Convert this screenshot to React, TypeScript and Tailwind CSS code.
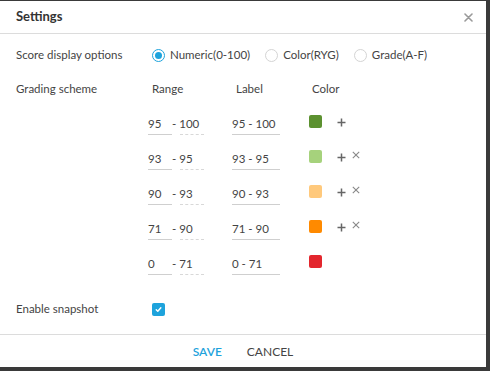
import React from "react";

const rows = [
  { from: "95", to: "100", label: "95 - 100", color: "#5c9130", plus: true, x: false },
  { from: "93", to: "95", label: "93 - 95", color: "#a6d27c", plus: true, x: true },
  { from: "90", to: "93", label: "90 - 93", color: "#ffc97c", plus: true, x: true },
  { from: "71", to: "90", label: "71 - 90", color: "#ff8a00", plus: true, x: true },
  { from: "0", to: "71", label: "0 - 71", color: "#e3262d", plus: false, x: false },
];

function Radio({ checked, label }: { checked?: boolean; label: string }) {
  return (
    <div className="flex items-center gap-[5px]">
      <div
        className={
          "w-[13px] h-[13px] rounded-full border flex items-center justify-center " +
          (checked ? "border-[#1ea3dc]" : "border-[#d4d4d4]")
        }
      >
        {checked && <div className="w-[7px] h-[7px] rounded-full bg-[#1ea3dc]" />}
      </div>
      <span>{label}</span>
    </div>
  );
}

export default function App() {
  return (
    <div
      className="w-[490px] h-[371px] bg-[#3a3a3a] pt-[1px] pr-[4px] pb-[4px] text-[#444] text-[11.5px]"
      style={{ fontFamily: "Lato, 'Open Sans', sans-serif" }}
    >
      <div className="bg-white w-full h-full flex flex-col">
        <div className="h-[33px] flex items-center justify-between px-[16px] border-b border-[#dcdcdc]">
          <span className="text-[13px] font-bold text-[#333]">Settings</span>
          <svg width="9" height="9" viewBox="0 0 9 9" className="mr-[-3px]">
            <path d="M1 1 L8 8 M8 1 L1 8" stroke="#9a9a9a" strokeWidth="1.6" strokeLinecap="round" />
          </svg>
        </div>
        <div className="flex-1 px-[16px] pt-[13px]">
          <div className="flex items-center h-[16px]">
            <div className="w-[136px]">Score display options</div>
            <div className="flex items-center gap-[15px]">
              <Radio checked label="Numeric(0-100)" />
              <Radio label="Color(RYG)" />
              <Radio label="Grade(A-F)" />
            </div>
          </div>
          <div className="flex items-center h-[16px] mt-[18px]">
            <div className="w-[136px]">Grading scheme</div>
            <div className="w-[84px]">Range</div>
            <div className="w-[76px]">Label</div>
            <div>Color</div>
          </div>
          <div className="flex flex-col gap-[14px] mt-[17px] ml-[132px]">
            {rows.map((r) => (
              <div key={r.label} className="flex items-start h-[21px]">
                <div className="w-[24px] h-[21px] border-b border-[#cfcfcf] pt-[1px]">{r.from}</div>
                <div className="w-[32px] h-[21px] pt-[1px] relative">
                  <span>- {r.to}</span>
                  <div className="absolute left-[8px] right-0 bottom-0 border-b border-dashed border-[#d8d8d8]" />
                </div>
                <div className="w-[48px] h-[21px] border-b border-[#cfcfcf] ml-[28px] pt-[1px]">{r.label}</div>
                <div
                  className="w-[13px] h-[13px] rounded-[2px] ml-[29px] mt-[1px]"
                  style={{ backgroundColor: r.color }}
                />
                {r.plus && (
                  <svg width="9" height="9" viewBox="0 0 9 9" className="ml-[15px] mt-[4px]">
                    <path d="M4.5 0.5 V8.5 M0.5 4.5 H8.5" stroke="#666" strokeWidth="1.5" />
                  </svg>
                )}
                {r.x && (
                  <svg width="8" height="8" viewBox="0 0 8 8" className="ml-[6px] mt-[2px]">
                    <path d="M0.8 0.8 L7.2 7.2 M7.2 0.8 L0.8 7.2" stroke="#888" strokeWidth="1.1" />
                  </svg>
                )}
              </div>
            ))}
          </div>
          <div className="flex items-center mt-[27px] h-[14px]">
            <div className="w-[136px]">Enable snapshot</div>
            <div className="w-[13px] h-[13px] rounded-[2px] bg-[#1ea3dc] flex items-center justify-center">
              <svg width="9" height="9" viewBox="0 0 10 10">
                <path d="M2.5 5.3 L4.2 7 L7.6 3" stroke="white" strokeWidth="1.6" fill="none" strokeLinecap="round" strokeLinejoin="round" />
              </svg>
            </div>
          </div>
        </div>
        <div className="h-[33px] border-t border-[#dcdcdc] flex items-center justify-center gap-[25px] text-[12px] pt-[1px]">
          <span className="text-[#1ea3dc] font-semibold">SAVE</span>
          <span className="text-[#444]">CANCEL</span>
        </div>
      </div>
    </div>
  );
}
